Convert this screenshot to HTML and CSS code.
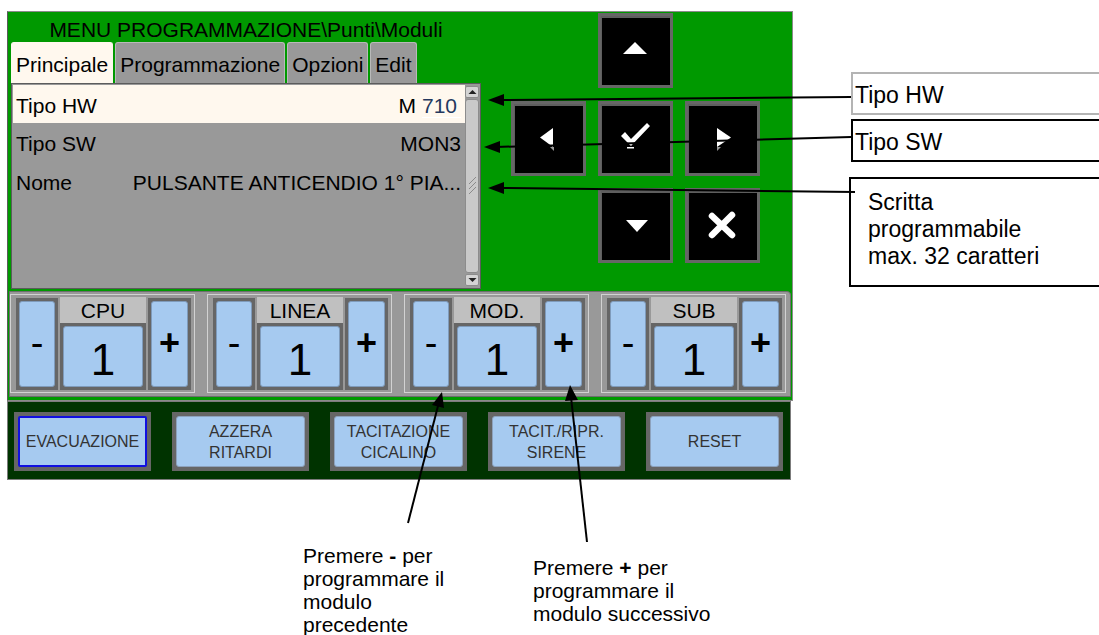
FILE: index.html
```html
<!DOCTYPE html>
<html lang="it">
  <head>
    <meta charset="utf-8">
    <link rel="stylesheet" href="styles.css">
  </head>
  <body>
    <div class="sheet">
      <div class="device">
        <div class="screen">
          <div class="upper">
            <div class="menu">
              <div class="title">MENU PROGRAMMAZIONE\Punti\Moduli</div>
              <div class="tabs">
                <div class="tab active">Principale</div>
                <div class="tab">Programmazione</div>
                <div class="tab">Opzioni</div>
                <div class="tab">Edit</div>
              </div>
              <div class="list">
                <div class="rows">
                  <div class="row sel"><span>Tipo HW</span><span class="val">M<span class="edit">710</span></span></div>
                  <div class="row"><span>Tipo SW</span><span class="val">MON3</span></div>
                  <div class="row"><span>Nome</span><span class="val">PULSANTE ANTICENDIO 1° PIA...</span></div>
                </div>
                <div class="scroll">
                  <div class="sb-btn"><svg width="9" height="6" viewBox="0 0 9 6"><polygon points="0.5,5 8.5,5 4.5,1" fill="#222"/></svg></div>
                  <div class="thumb">
                    <svg width="9" height="22" viewBox="0 0 9 22"><path d="M1 9 L8 2 M1 14 L8 7 M1 19 L8 12" stroke="#8a8a8a" stroke-width="1" fill="none"/></svg>
                  </div>
                  <div class="sb-btn"><svg width="9" height="6" viewBox="0 0 9 6"><polygon points="0.5,1 8.5,1 4.5,5" fill="#222"/></svg></div>
                </div>
              </div>
            </div>
            <div class="nav">
              <div class="key k-up"><svg viewBox="0 0 69 69"><polygon points="22,38 46,38 34,26" fill="#fff"/></svg></div>
              <div class="key k-left"><svg viewBox="0 0 69 69"><polygon points="26,33.5 39,24 39,43" fill="#fff"/><polygon points="36,43 40,43 40,47" fill="#9a9a9a"/></svg></div>
              <div class="key k-ok"><svg viewBox="0 0 69 69"><polygon points="20,32 24,28 30,35 46,19 49,22 30,42" fill="#fff"/><rect x="26" y="43" width="7" height="1.5" fill="#fff"/></svg></div>
              <div class="key k-right"><svg viewBox="0 0 69 69"><polygon points="29,24 29,43 43,33.5" fill="#fff"/><polygon points="29,43 33,43 29,47" fill="#9a9a9a"/></svg></div>
              <div class="key k-down"><svg viewBox="0 0 69 69"><polygon points="25,29 47,29 36,41" fill="#fff"/></svg></div>
              <div class="key k-esc"><svg viewBox="0 0 69 69"><path d="M24 25 L44 44 M44 24 L24 44" stroke="#fff" stroke-width="6.5" stroke-linecap="round"/></svg></div>
            </div>
          </div>
          <div class="counters">
            <div class="group">
              <div class="step"><div class="pad minus">-</div></div>
              <div class="mid"><div class="lbl">CPU</div><div class="box"><div class="pad num">1</div></div></div>
              <div class="step plus"><div class="pad">+</div></div>
            </div>
            <div class="group">
              <div class="step"><div class="pad minus">-</div></div>
              <div class="mid"><div class="lbl">LINEA</div><div class="box"><div class="pad num">1</div></div></div>
              <div class="step plus"><div class="pad">+</div></div>
            </div>
            <div class="group">
              <div class="step"><div class="pad minus">-</div></div>
              <div class="mid"><div class="lbl">MOD.</div><div class="box"><div class="pad num">1</div></div></div>
              <div class="step plus"><div class="pad">+</div></div>
            </div>
            <div class="group">
              <div class="step"><div class="pad minus">-</div></div>
              <div class="mid"><div class="lbl">SUB</div><div class="box"><div class="pad num">1</div></div></div>
              <div class="step plus"><div class="pad">+</div></div>
            </div>
          </div>
        </div>
        <div class="actions">
          <div class="act"><div class="face focus">EVACUAZIONE</div></div>
          <div class="act"><div class="face">AZZERA<br>RITARDI</div></div>
          <div class="act"><div class="face">TACITAZIONE<br>CICALINO</div></div>
          <div class="act"><div class="face">TACIT./RIPR.<br>SIRENE</div></div>
          <div class="act"><div class="face">RESET</div></div>
        </div>
      </div>

      <div class="note n-hw">Tipo HW</div>
      <div class="note n-sw">Tipo SW</div>
      <div class="note n-name">Scritta<br>programmabile<br>max. 32 caratteri</div>
      <div class="hint h-minus">Premere <b>-</b> per<br>programmare il<br>modulo<br>precedente</div>
      <div class="hint h-plus">Premere <b>+</b> per<br>programmare il<br>modulo successivo</div>

      <svg class="leaders" width="1099" height="635" viewBox="0 0 1099 635">
        <g stroke="#000" stroke-width="2" fill="none">
          <line x1="851" y1="97" x2="500" y2="100"/>
          <line x1="851" y1="137" x2="496" y2="147"/>
          <line x1="855" y1="192" x2="500" y2="188"/>
          <line x1="408" y1="523" x2="439" y2="402"/>
          <line x1="587" y1="542" x2="571" y2="397"/>
        </g>
        <g fill="#000">
          <polygon points="488,100 504,94 504,106"/>
          <polygon points="484,147 500,141 500,153"/>
          <polygon points="488,188 504,182 504,194"/>
          <polygon points="442,392 444,408 432,405"/>
          <polygon points="570,385 578,400 565,401"/>
        </g>
      </svg>
    </div>
  </body>
</html>
```

FILE: styles.css
```css
* {
  box-sizing: border-box;
}
body {
  margin: 0;
  background: #fff;
  color: #000;
  font-family: "Liberation Sans", Arial, sans-serif;
}
.sheet {
  position: relative;
  width: 1099px;
  height: 635px;
  overflow: hidden;
  padding: 11px 0 0 7px;
}
.device {
  width: 786px;
}
.screen {
  background: #009900;
  border: 1px solid #8a8a8a;
  border-left-color: #5a5a5a;
  padding-bottom: 3px;
}
.upper {
  display: flex;
  height: 279px;
}
.menu {
  width: 470px;
  margin-left: 3px;
  display: flex;
  flex-direction: column;
}
.title {
  height: 30px;
  padding-top: 6px;
  line-height: 24px;
  font-size: 21px;
  text-align: center;
  white-space: nowrap;
}
.tabs {
  display: flex;
  gap: 2px;
  height: 41px;
}
.tab {
  background: #999;
  border: 1px solid #b9b9b9;
  border-bottom: none;
  border-radius: 3px 3px 0 0;
  padding: 3px 4px 0;
  line-height: 37px;
  font-size: 21px;
  white-space: nowrap;
}
.tab.active {
  background: #fff8ee;
  border-color: #fff8ee;
}
.list {
  height: 206px;
  display: flex;
  background: #999;
  border: 1px solid #5c5c5c;
  padding: 1px 0 1px 1px;
}
.rows {
  flex: 1;
}
.row {
  display: flex;
  justify-content: space-between;
  height: 39px;
  padding: 2px 4px 0 3px;
  line-height: 37px;
  font-size: 21px;
  white-space: nowrap;
}
.row.sel {
  background: #fff8ee;
  height: 38px;
}
.edit {
  margin-left: 6px;
  padding-right: 4px;
  color: #24385e;
  border-bottom: 1px solid #fff;
}
.scroll {
  width: 15px;
  display: flex;
  flex-direction: column;
  gap: 1px;
  padding: 1px 1px 1px 0;
}
.sb-btn {
  height: 12px;
  background: #d4d4d4;
  border: 1px solid #8c8c8c;
  border-radius: 2px;
  display: flex;
  align-items: center;
  justify-content: center;
}
.thumb {
  flex: 1;
  background: #c9c9c9;
  border: 1px solid #8c8c8c;
  border-radius: 3px;
  display: flex;
  align-items: center;
  justify-content: center;
}
.nav {
  margin: 1px 0 0 30px;
  display: grid;
  grid-template-columns: repeat(3, 75px);
  grid-template-rows: repeat(3, 75px);
  gap: 12.5px 12px;
}
.key {
  background: #000;
  border: 3px solid #666;
  box-shadow: inset 1px 2px 0 #5e5e5e;
}
.key svg {
  display: block;
  width: 69px;
  height: 69px;
}
.k-up {
  grid-column: 2;
  grid-row: 1;
}
.k-left {
  grid-column: 1;
  grid-row: 2;
}
.k-ok {
  grid-column: 2;
  grid-row: 2;
}
.k-right {
  grid-column: 3;
  grid-row: 2;
}
.k-down {
  grid-column: 2;
  grid-row: 3;
}
.k-esc {
  grid-column: 3;
  grid-row: 3;
}
.counters {
  height: 106px;
  margin-left: 1px;
  width: 782px;
  background: #999;
  border: 1px solid #6e6e6e;
  border-radius: 0 4px 0 0;
  padding: 2px 0 0 0;
  display: flex;
  gap: 12px;
}
.group {
  width: 185px;
  height: 99px;
  border: 1px solid #d2d2d2;
  padding: 1px 2px 2px 5px;
  display: flex;
  gap: 2px;
}
.step {
  width: 42px;
  margin-top: 2px;
  background: #666;
  padding: 3px;
  display: flex;
}
.step.plus {
  width: 43px;
}
.pad {
  flex: 1;
  background: #a6caf0;
  border: 1px solid #7f9bbb;
  border-radius: 3px;
  display: flex;
  align-items: center;
  justify-content: center;
  font-size: 36px;
  font-weight: bold;
  padding-bottom: 2px;
}
.pad.minus {
  font-weight: normal;
  font-size: 38px;
}
.mid {
  width: 86px;
  display: flex;
  flex-direction: column;
  padding-top: 1px;
}
.lbl {
  height: 26px;
  background: #c0c0c0;
  text-align: center;
  padding-top: 2px;
  line-height: 24px;
  font-size: 21px;
}
.box {
  flex: 1;
  background: #666;
  padding: 3px;
  display: flex;
}
.pad.num {
  font-size: 44px;
  font-weight: normal;
  padding: 6px 0 0;
}
.actions {
  width: 784px;
  height: 79px;
  background: #003300;
  border: 1px solid #7c7c7c;
  padding: 10px 0 0 6px;
  display: flex;
  gap: 21px;
  align-items: flex-start;
}
.act {
  width: 137px;
  height: 59px;
  background: #666;
  padding: 4px;
  display: flex;
}
.face {
  flex: 1;
  background: #a6caf0;
  border: 1px solid #8da2bd;
  border-radius: 3px;
  display: flex;
  align-items: center;
  justify-content: center;
  text-align: center;
  font-size: 16px;
  line-height: 21px;
  color: #333;
}
.face.focus {
  border: 2px solid #1010e0;
  border-radius: 2px;
}
.note {
  position: absolute;
  left: 851px;
  width: 260px;
  height: 43px;
  border: 2px solid #000;
  padding: 2px 0 0 2px;
  font-size: 23px;
  line-height: 39px;
}
.n-hw {
  top: 72px;
  border-color: #b4b4b4;
}
.n-sw {
  top: 119px;
}
.n-name {
  left: 849px;
  top: 177px;
  height: 110px;
  padding: 10px 0 0 17px;
  line-height: 27px;
}
.hint {
  position: absolute;
  font-size: 21px;
  line-height: 23px;
  white-space: nowrap;
}
.h-minus {
  left: 303px;
  top: 544px;
}
.h-plus {
  left: 533px;
  top: 556px;
}
.leaders {
  position: absolute;
  left: 0;
  top: 0;
  pointer-events: none;
}
```
